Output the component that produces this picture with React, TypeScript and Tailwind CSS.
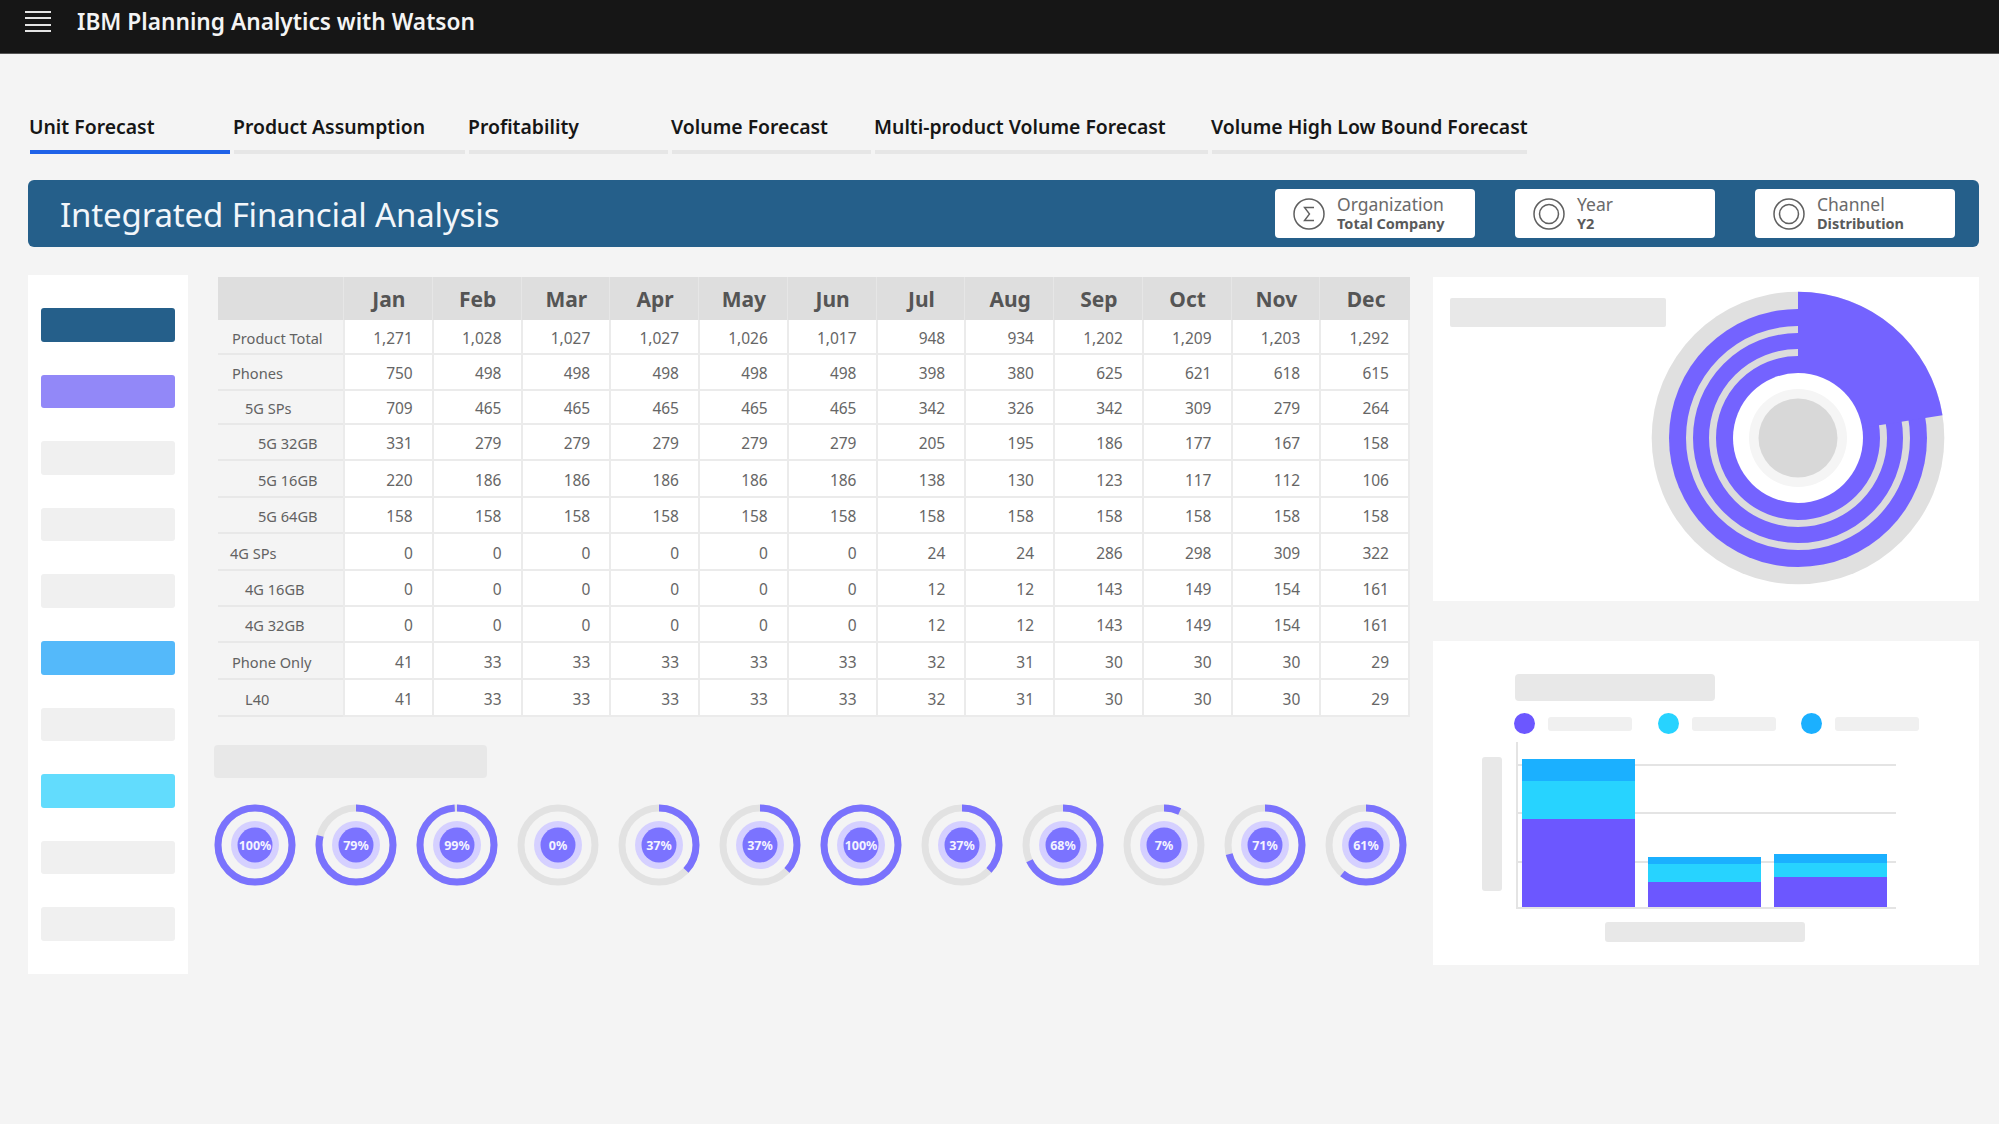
const tabs = [
  { label: "Unit Forecast", width: "w-[200px]", active: true },
  { label: "Product Assumption", width: "w-[231px]" },
  { label: "Profitability", width: "w-[199px]" },
  { label: "Volume Forecast", width: "w-[199px]" },
  { label: "Multi-product Volume Forecast", width: "w-[333px]" },
  { label: "Volume High Low Bound Forecast", width: "w-[315px]" },
];

const months = ["Jan", "Feb", "Mar", "Apr", "May", "Jun", "Jul", "Aug", "Sep", "Oct", "Nov", "Dec"];

const rows = [
  { label: "Product Total", indent: "pl-[14px]", values: ["1,271", "1,028", "1,027", "1,027", "1,026", "1,017", "948", "934", "1,202", "1,209", "1,203", "1,292"] },
  { label: "Phones", indent: "pl-[14px]", values: ["750", "498", "498", "498", "498", "498", "398", "380", "625", "621", "618", "615"] },
  { label: "5G SPs", indent: "pl-[27px]", values: ["709", "465", "465", "465", "465", "465", "342", "326", "342", "309", "279", "264"] },
  { label: "5G 32GB", indent: "pl-[40px]", values: ["331", "279", "279", "279", "279", "279", "205", "195", "186", "177", "167", "158"] },
  { label: "5G 16GB", indent: "pl-[40px]", values: ["220", "186", "186", "186", "186", "186", "138", "130", "123", "117", "112", "106"] },
  { label: "5G 64GB", indent: "pl-[40px]", values: ["158", "158", "158", "158", "158", "158", "158", "158", "158", "158", "158", "158"] },
  { label: "4G SPs", indent: "pl-[12px]", values: ["0", "0", "0", "0", "0", "0", "24", "24", "286", "298", "309", "322"] },
  { label: "4G 16GB", indent: "pl-[27px]", values: ["0", "0", "0", "0", "0", "0", "12", "12", "143", "149", "154", "161"] },
  { label: "4G 32GB", indent: "pl-[27px]", values: ["0", "0", "0", "0", "0", "0", "12", "12", "143", "149", "154", "161"] },
  { label: "Phone Only", indent: "pl-[14px]", values: ["41", "33", "33", "33", "33", "33", "32", "31", "30", "30", "30", "29"] },
  { label: "L40", indent: "pl-[27px]", values: ["41", "33", "33", "33", "33", "33", "32", "31", "30", "30", "30", "29"] },
];

const sideBars = [
  "bg-[#255f8a]",
  "bg-[#9288f8]",
  "bg-[#f0f0f0]",
  "bg-[#f0f0f0]",
  "bg-[#f0f0f0]",
  "bg-[#54b9fa]",
  "bg-[#f0f0f0]",
  "bg-[#62dcfd]",
  "bg-[#f0f0f0]",
  "bg-[#f0f0f0]",
];

const progress = [100, 79, 99, 0, 37, 37, 100, 37, 68, 7, 71, 61];

function Hamburger() {
  return (
    <div className="mb-[2px] flex h-[21px] w-[26px] flex-col justify-between">
      <span className="h-[2px] bg-[#e4e4e4]" />
      <span className="h-[2px] bg-[#e4e4e4]" />
      <span className="h-[2px] bg-[#e4e4e4]" />
      <span className="h-[2px] bg-[#e4e4e4]" />
    </div>
  );
}

function FilterIcon({ sigma }: { sigma?: boolean }) {
  return (
    <svg width="32" height="32" viewBox="0 0 32 32" fill="none" stroke="#5f5f5f" strokeWidth="1.5" className="shrink-0">
      <circle cx="16" cy="16" r="15" />
      {sigma ? (
        <path d="M21 9.5h-9.5l5 6.5-5 6.5H21" strokeWidth="1.4" />
      ) : (
        <circle cx="16" cy="16" r="9.5" />
      )}
    </svg>
  );
}

function FilterCard({ title, value, sigma }: { title: string; value: string; sigma?: boolean }) {
  return (
    <div className="flex h-[49px] w-[200px] items-center gap-[12px] rounded-[4px] bg-white pl-[18px]">
      <FilterIcon sigma={sigma} />
      <div className="mt-[-2px] flex flex-col">
        <span className="text-[17.5px] leading-[21px] text-[#6a6a6a]">{title}</span>
        <span className="text-[14.5px] font-bold leading-[17px] text-[#5a5a5a]">{value}</span>
      </div>
    </div>
  );
}

function Sidebar() {
  return (
    <div className="mt-[-2px] flex h-[699px] w-[160px] shrink-0 flex-col gap-[33px] bg-white px-[13px] pt-[33px]">
      {sideBars.map((color, i) => (
        <div key={i} className={`h-[33.6px] rounded-[3px] ${color}`} />
      ))}
    </div>
  );
}

function DataTable() {
  return (
    <div className="ml-[4px] grid w-[1192px] grid-cols-[125px_repeat(12,88.75px)] grid-rows-[43px_35px_36px_34px_36px_37px_36px_37px_36px_36px_37px_37px] border-r-[2px] border-[#ebebeb]">
      <div className="bg-[#dedede]" />
      {months.map((month, i) => (
        <div
          key={month}
          className={`flex items-center justify-center border-l-[1px] border-[#e6e6e6] bg-[#dedede] pl-[2px] pt-[2px] text-[21px] font-bold text-[#555555] ${i === 11 ? "mr-[-2px]" : ""}`}
        >
          {month}
        </div>
      ))}
      {rows.map((row) => (
        <div key={row.label} className="contents">
          <div className={`flex items-center border-b-[2px] border-[#e8e8e8] pt-[4px] text-[14.6px] text-[#626262] ${row.indent}`}>
            {row.label}
          </div>
          {row.values.map((value, i) => (
            <div
              key={i}
              className="flex items-center justify-end border-b-[2px] border-l-[2px] border-[#ebebeb] bg-white pr-[19px] pt-[4px] text-[15.5px] text-[#666666]"
            >
              {value}
            </div>
          ))}
        </div>
      ))}
    </div>
  );
}

function Gauge({ percent }: { percent: number }) {
  return (
    <svg width="82" height="82" viewBox="0 0 82 82" className="shrink-0">
      <circle cx="41" cy="41" r="37" fill="none" stroke="#e2e2e2" strokeWidth="7" />
      {percent > 0 ? (
        <circle
          cx="41"
          cy="41"
          r="37"
          fill="none"
          stroke="#7a72fd"
          strokeWidth="7"
          pathLength="100"
          strokeDasharray={`${percent} 100`}
          transform="rotate(-90 41 41)"
        />
      ) : null}
      <circle cx="41" cy="41" r="24" fill="#d5d0ff" />
      <circle cx="41" cy="41" r="17.5" fill="#7b73ff" />
      <text x="41" y="45.5" textAnchor="middle" fill="#f4f3ff" fontSize="12.5" fontWeight="700">
        {percent}%
      </text>
    </svg>
  );
}

function RadialChart() {
  return (
    <svg width="296" height="296" viewBox="-148 -148 296 296" className="ml-[-16px] mt-[13px] shrink-0">
      <circle r="146.3" fill="#e0e0e0" />
      <circle r="129" fill="#7463ff" />
      <circle r="108.5" fill="none" stroke="#dcdcdc" strokeWidth="7" />
      <circle r="85.5" fill="none" stroke="#dcdcdc" strokeWidth="7" />
      <path d="M0 0L0 -146.3A146.3 146.3 0 0 1 144.5 -22.8Z" fill="#7463ff" />
      <circle r="65" fill="#ffffff" />
      <circle r="49" fill="#f5f5f5" />
      <circle r="39.5" fill="#d8d8d8" />
    </svg>
  );
}

function LegendItem({ color }: { color: string }) {
  return (
    <div className="flex w-[143.5px] items-center gap-[13px]">
      <span className={`h-[21px] w-[21px] rounded-full ${color}`} />
      <span className="h-[14px] w-[84px] rounded-[3px] bg-[#f0f0f0]" />
    </div>
  );
}

function StackedBar({ top, mid, low }: { top: string; mid: string; low: string }) {
  return (
    <div className="relative flex w-[113px] flex-col">
      <div className={`bg-[#1bb0ff] ${top}`} />
      <div className={`bg-[#27d3ff] ${mid}`} />
      <div className={`bg-[#6c57ff] ${low}`} />
    </div>
  );
}

function BarChart() {
  return (
    <div className="mt-[8px] flex">
      <div className="ml-[49px] mt-[15px] h-[134px] w-[20px] rounded-[3px] bg-[#e8e8e8]" />
      <div className="relative ml-[14px] flex h-[167px] w-[380px] items-end gap-[13px] border-b-[2px] border-l-[2px] border-[#e4e4e4] pl-[4px]">
        <div className="absolute left-0 right-0 top-[22px] h-[2px] bg-[#e4e4e4]" />
        <div className="absolute left-0 right-0 top-[70px] h-[2px] bg-[#e4e4e4]" />
        <div className="absolute left-0 right-0 top-[119px] h-[2px] bg-[#e4e4e4]" />
        <StackedBar top="h-[22px]" mid="h-[38px]" low="h-[88px]" />
        <StackedBar top="h-[7px]" mid="h-[18px]" low="h-[25px]" />
        <StackedBar top="h-[9px]" mid="h-[14px]" low="h-[30px]" />
      </div>
    </div>
  );
}

export default function App() {
  return (
    <div className="h-[1124px] w-[1999px] overflow-hidden bg-[#f4f4f4] font-['Noto_Sans',sans-serif]">
      <header className="flex h-[54px] items-center gap-[26px] border-b border-[#555555] bg-[#161616] pb-[8px] pl-[25px]">
        <Hamburger />
        <span className="text-[22.7px] font-semibold text-[#f4f4f4]">IBM Planning Analytics with Watson</span>
      </header>

      <nav className="ml-[30px] mt-[50px] flex gap-[4px]">
        {tabs.map((tab) => (
          <div key={tab.label} className={tab.width}>
            <div className="ml-[-1px] whitespace-nowrap text-[19.4px] font-semibold leading-[46px] text-[#161616]">
              {tab.label}
            </div>
            <div className={`h-[4px] ${tab.active ? "bg-[#1f62e8]" : "bg-[#e6e6e6]"}`} />
          </div>
        ))}
      </nav>

      <section className="ml-[28px] mr-[20px] mt-[26px] flex h-[67px] items-center justify-between rounded-[6px] bg-[#255f8a] pl-[32px] pr-[24px]">
        <h1 className="mt-[2px] text-[33px] leading-none tracking-[-0.15px] text-[#f2f6fa]">Integrated Financial Analysis</h1>
        <div className="flex gap-[40px]">
          <FilterCard title="Organization" value="Total Company" sigma />
          <FilterCard title="Year" value="Y2" />
          <FilterCard title="Channel" value="Distribution" />
        </div>
      </section>

      <main className="ml-[28px] mt-[30px] flex">
        <Sidebar />

        <div className="ml-[26px] w-[1196px]">
          <DataTable />
          <div className="mt-[28px] h-[33px] w-[273px] rounded-[4px] bg-[#e8e8e8]" />
          <div className="mt-[26px] flex gap-[19px]">
            {progress.map((percent, i) => (
              <Gauge key={i} percent={percent} />
            ))}
          </div>
        </div>

        <div className="ml-[23px] flex w-[546px] flex-col gap-[40px]">
          <div className="flex h-[324px] items-start bg-white">
            <div className="ml-[17px] mt-[21px] h-[29px] w-[216px] shrink-0 rounded-[2px] bg-[#e8e8e8]" />
            <RadialChart />
          </div>
          <div className="h-[324px] bg-white pt-[33px]">
            <div className="ml-[82px] h-[27px] w-[200px] rounded-[4px] bg-[#e8e8e8]" />
            <div className="ml-[81px] mt-[12px] flex">
              <LegendItem color="bg-[#6c57ff]" />
              <LegendItem color="bg-[#27d3ff]" />
              <LegendItem color="bg-[#1bb0ff]" />
            </div>
            <BarChart />
            <div className="ml-[172px] mt-[13px] h-[20px] w-[200px] rounded-[3px] bg-[#e8e8e8]" />
          </div>
        </div>
      </main>
    </div>
  );
}
